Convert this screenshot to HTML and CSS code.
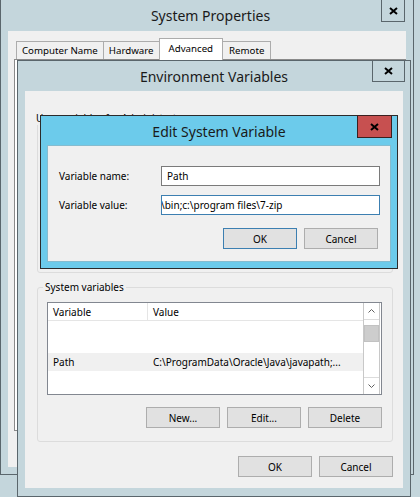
FILE: index.html
```html
<!DOCTYPE html>
<html>
<head>
<meta charset="utf-8">
<link rel="stylesheet" href="styles.css">
</head>
<body>
<div class="desk">

  <div class="win win-sp">
    <div class="titlebar titlebar-sp">
      <span class="title">System Properties</span>
      <div class="close close-sp"><svg width="9" height="8" viewBox="0 0 9 8"><path d="M1 1 L8 7 M8 1 L1 7" stroke="#000" stroke-width="2"/></svg></div>
    </div>
    <div class="frame">
      <div class="client sp-client">
        <div class="tabs">
          <div class="tab">Computer Name</div>
          <div class="tab">Hardware</div>
          <div class="tab tab-active">Advanced</div>
          <div class="tab tab-last">Remote</div>
        </div>
        <div class="tabpanel"></div>
      </div>
    </div>
  </div>

  <div class="win win-ev">
    <div class="titlebar">
      <span class="title">Environment Variables</span>
      <div class="close close-ev"><svg width="9" height="8" viewBox="0 0 9 8"><path d="M1 1 L8 7 M8 1 L1 7" stroke="#000" stroke-width="2"/></svg></div>
    </div>
    <div class="frame">
      <div class="client ev-client">
        <fieldset class="group group-user">
          <legend>User variables for Administrator</legend>
          <div class="group-space"></div>
        </fieldset>
        <fieldset class="group group-sys">
          <legend>System variables</legend>
          <div class="list">
            <div class="list-main">
              <div class="list-head">
                <div class="col col-var">Variable</div>
                <div class="col col-val">Value</div>
              </div>
              <div class="list-body">
                <div class="row row-sel">
                  <div class="col col-var">Path</div>
                  <div class="col col-val">C:\ProgramData\Oracle\Java\javapath;...</div>
                </div>
              </div>
            </div>
            <div class="scrollbar">
              <div class="sb-btn sb-up"><svg width="7" height="4" viewBox="0 0 7 4"><path d="M0.5 3.5 L3.5 0.5 L6.5 3.5" fill="none" stroke="#606060"/></svg></div>
              <div class="sb-track"><div class="sb-thumb"></div></div>
              <div class="sb-btn sb-down"><svg width="7" height="4" viewBox="0 0 7 4"><path d="M0.5 0.5 L3.5 3.5 L6.5 0.5" fill="none" stroke="#606060"/></svg></div>
            </div>
          </div>
          <div class="btnrow group-btns">
            <button class="btn">New...</button>
            <button class="btn">Edit...</button>
            <button class="btn">Delete</button>
          </div>
        </fieldset>
        <div class="btnrow ev-btns">
          <button class="btn">OK</button>
          <button class="btn">Cancel</button>
        </div>
      </div>
    </div>
  </div>

  <div class="win win-ed">
    <div class="titlebar">
      <span class="title">Edit System Variable</span>
      <div class="close close-ed"><svg width="9" height="8" viewBox="0 0 9 8"><path d="M1 1 L8 7 M8 1 L1 7" stroke="#000" stroke-width="2"/></svg></div>
    </div>
    <div class="frame">
      <div class="client ed-client">
        <div class="field">
          <span class="field-label">Variable name:</span>
          <div class="input">Path</div>
        </div>
        <div class="field">
          <span class="field-label">Variable value:</span>
          <div class="input input-focus"><span class="value-text">\bin;c:\program files\7-zip</span></div>
        </div>
        <div class="btnrow ed-btns">
          <button class="btn btn-default">OK</button>
          <button class="btn">Cancel</button>
        </div>
      </div>
    </div>
  </div>

</div>
</body>
</html>
```

FILE: styles.css
```css
* { box-sizing: border-box; }
html, body { margin: 0; padding: 0; }
body {
  width: 420px;
  height: 497px;
  overflow: hidden;
  background: #c4d6dc;
  font-family: "Noto Sans", "Open Sans", "Liberation Sans", sans-serif;
  font-size: 10px;
  color: #000;
}
.desk { position: relative; width: 420px; height: 497px; }

/* windows */
.win {
  position: absolute;
  display: flex;
  flex-direction: column;
  border: 1px solid #5a666c;
  background: #c4d6dc;
}
.win-sp { left: 0; top: -1px; width: 414px; height: 476px; }
.win-ev { left: 17px; top: 60px; width: 394px; height: 437px; }
.win-ed { left: 40px; top: 115px; width: 358px; height: 154px; border-color: #2b2b2b; background: #6ccbeb; }

.titlebar {
  position: relative;
  flex: none;
  height: 30px;
  display: flex;
  align-items: center;
  justify-content: center;
  font-size: 14px;
  color: #1a1a1a;
}
.titlebar-sp { height: 31px; padding-left: 7px; }

.close {
  position: absolute;
  top: -1px;
  right: 5px;
  height: 22px;
  display: flex;
  align-items: center;
  justify-content: center;
  border: 1px solid #5a666c;
}
.close-sp { right: 8px; width: 24px; height: 23px; }
.close-ev { width: 33px; }
.close-ed { width: 35px; height: 23px; background: #c75050; border-color: #3a2020; }

.frame {
  flex: 1;
  display: flex;
  flex-direction: column;
  padding: 0 7px 7px;
}
.win-ev .frame { padding-bottom: 8px; }
.client { flex: 1; background: #f0f0f0; }
.ed-client { box-shadow: 0 0 0 1px #86bccf; }

/* system properties */
.sp-client { display: flex; flex-direction: column; }
.tabs {
  display: flex;
  align-items: flex-end;
  height: 21px;
  margin: 7px 0 0 8px;
}
.tab {
  height: 18px;
  padding: 0 5px;
  border: 1px solid #acacac;
  border-bottom: none;
  margin-right: -1px;
  background: #f0f0f0;
  display: flex;
  align-items: center;
  white-space: nowrap;
  font-size: 9.7px;
}
.tab-last { padding: 0 6px; }
.tab-active {
  position: relative;
  z-index: 1;
  height: 22px;
  margin-bottom: -1px;
  padding: 0 9px 3px;
  background: #fff;
}
.tabpanel {
  margin-left: 6px;
  height: 372px;
  background: #fff;
  border: 1px solid #8a8a8a;
}

/* environment variables */
.ev-client {
  display: flex;
  flex-direction: column;
  padding: 20px 10px 0 12px;
}
.group {
  margin: 0;
  padding: 0 10px 13px 9px;
  border: 1px solid #dcdcdc;
  border-radius: 3px;
  min-width: 0;
}
.group legend {
  height: 14px;
  line-height: 14px;
  padding: 0 2px;
  margin-left: -4px;
}
.group-user { padding: 0; }
.group-user .group-space { height: 147px; }
.group-sys { margin-top: 7px; }

.list {
  display: flex;
  height: 93px;
  margin-top: 8px;
  border: 1px solid #828790;
  background: #fff;
}
.list-main { flex: 1; min-width: 0; }
.list-head {
  display: flex;
  height: 18px;
  border-bottom: 1px solid #e5e5e5;
}
.col {
  display: flex;
  align-items: center;
  padding-left: 5px;
  white-space: nowrap;
  overflow: hidden;
}
.col-var { width: 100px; flex: none; }
.list-head .col-var { border-right: 1px solid #e5e5e5; }
.col-val { flex: 1; }
.list-body { padding-top: 32px; }
.row { display: flex; height: 18px; }
.row-sel { background: #f0f0f0; }

.scrollbar {
  width: 17px;
  margin-right: 1px;
  display: flex;
  flex-direction: column;
  border-left: 1px solid #c8c8c8;
  border-right: 1px solid #c8c8c8;
  background: #fff;
}
.sb-btn {
  height: 17px;
  display: flex;
  align-items: center;
  justify-content: center;
  flex: none;
}
.sb-up { border-bottom: 1px solid #dcdcdc; }
.sb-down { border-top: 1px solid #dcdcdc; }
.sb-track { flex: 1; padding-top: 5px; }
.sb-thumb {
  height: 17px;
  background: #cdcdcd;
  border: 1px solid #c2c2c2;
}

.btnrow {
  display: flex;
  justify-content: flex-end;
  gap: 7px;
}
.btn {
  width: 74px;
  height: 21px;
  padding: 0;
  margin: 0;
  border: 1px solid #adadad;
  background: #e1e1e1;
  font: inherit;
  color: #000;
}
.btn-default { border-color: #3c7fb1; }
.group-btns { margin-top: 12px; }
.ev-btns { margin-top: 14px; }

/* edit dialog */
.ed-client {
  display: flex;
  flex-direction: column;
  padding: 20px 0 0 11px;
}
.field { display: flex; align-items: center; height: 20px; }
.field + .field { margin-top: 9px; }
.field-label { width: 102px; flex: none; }
.input {
  width: 219px;
  height: 20px;
  border: 1px solid #7a7a7a;
  background: #fff;
  padding: 0 5px;
  display: flex;
  align-items: center;
  overflow: hidden;
  white-space: nowrap;
}
.input-focus { border-color: #3c7fb1; padding: 0; }
.value-text { margin-left: -1px; }
.ed-btns { margin-top: 13px; padding-right: 12px; }
```
